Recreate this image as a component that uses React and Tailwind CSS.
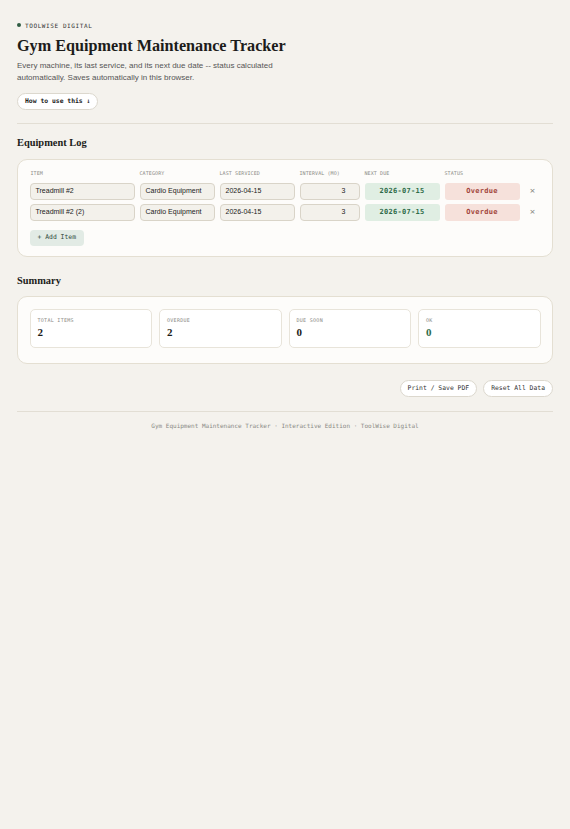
import React from 'react';

const mono = "font-['DejaVu_Sans_Mono',monospace]";
const serif = "font-['Liberation_Serif',serif]";
const sans = "font-['Liberation_Sans',Arial,sans-serif]";

const items = [
  { name: 'Treadmill #2', category: 'Cardio Equipment', last: '2026-04-15', interval: 3, next: '2026-07-15', status: 'Overdue' },
  { name: 'Treadmill #2 (2)', category: 'Cardio Equipment', last: '2026-04-15', interval: 3, next: '2026-07-15', status: 'Overdue' },
];

const stats = [
  { label: 'Total Items', value: 2, tone: 'text-[#1c1c1a]' },
  { label: 'Overdue', value: 2, tone: 'text-[#1c1c1a]' },
  { label: 'Due Soon', value: 0, tone: 'text-[#1c1c1a]' },
  { label: 'OK', value: 0, tone: 'text-[#2e6b48]' },
];

const cols = 'grid grid-cols-[105px_75px_75px_60px_75px_75px_1fr] gap-x-[5px]';
const field = `h-[17px] rounded-[4px] border border-[#d9d4c8] bg-[#f3f1eb] px-[5px] text-[7px] text-[#222] flex items-center ${sans}`;

const EquipmentRow = ({ item }) => (
  <div className={`${cols} items-center`}>
    <div className={field}>{item.name}</div>
    <div className={field}>{item.category}</div>
    <div className={field}>{item.last}</div>
    <div className={`${field} justify-end pr-[13px]`}>{item.interval}</div>
    <div className={`h-[17px] rounded-[3px] bg-[#e0eee3] flex items-center justify-center text-[7px] font-bold tracking-[0.3px] text-[#2e6b48] ${mono}`}>
      {item.next}
    </div>
    <div className={`h-[17px] rounded-[3px] bg-[#f6e1db] flex items-center justify-center text-[7px] font-bold tracking-[0.3px] text-[#a2453a] ${mono}`}>
      {item.status}
    </div>
    <div className="flex justify-center text-[9.5px] leading-none text-[#8a8a85]">×</div>
  </div>
);

export default function App() {
  return (
    <div className="min-h-screen bg-[#f4f2ed] text-[#1c1c1a]">
      <div className="px-[17px] pt-[21px] pb-10">
        {/* header */}
        <div className="flex items-center gap-[4px] h-[8px]">
          <span className="w-[4px] h-[4px] rounded-full bg-[#2f5d43]"></span>
          <span className={`text-[6px] tracking-[0.6px] text-[#333] ${mono}`}>TOOLWISE DIGITAL</span>
        </div>
        <h1 className={`mt-[7px] text-[16.2px] leading-[20px] font-bold ${serif}`}>
          Gym Equipment Maintenance Tracker
        </h1>
        <p className={`mt-[4px] max-w-[292px] text-[8px] leading-[12px] text-[#555] ${sans}`}>
          Every machine, its last service, and its next due date -- status calculated automatically. Saves automatically in this browser.
        </p>
        <button className={`mt-[9px] h-[17px] px-[7px] rounded-full border border-[#dcd8ce] bg-white text-[6.4px] font-bold text-[#222] ${mono}`}>
          How to use this ↓
        </button>

        <div className="mt-[13px] border-t border-[#e2ded4]"></div>

        {/* equipment log */}
        <h2 className={`mt-[12px] text-[10.4px] leading-[14px] font-bold ${serif}`}>Equipment Log</h2>
        <div className="mt-[9px] rounded-[10px] border-[1.5px] border-[#e4dfd2] bg-[#fdfcfa] px-[11.5px] pt-[10px] pb-[10.5px]">
          <div className={`${cols} h-[8px] items-center text-[5px] tracking-[0.1px] text-[#8a8a85] ${mono}`}>
            <span className="pl-[1px]">ITEM</span>
            <span>CATEGORY</span>
            <span>LAST SERVICED</span>
            <span>INTERVAL (MO)</span>
            <span>NEXT DUE</span>
            <span>STATUS</span>
            <span></span>
          </div>
          <div className="mt-[4.5px] flex flex-col gap-[4px]">
            {items.map((it, i) => (
              <EquipmentRow key={i} item={it} />
            ))}
          </div>
          <button className={`mt-[9px] h-[16px] px-[8px] rounded-[4px] bg-[#e2ebe5] text-[6.4px] text-[#2d4a3a] ${mono}`}>
            + Add Item
          </button>
        </div>

        {/* summary */}
        <h2 className={`mt-[17px] text-[10.4px] leading-[14px] font-bold ${serif}`}>Summary</h2>
        <div className="mt-[8px] rounded-[10px] border-[1.5px] border-[#e4dfd2] bg-[#fdfcfa] px-[11.5px] pt-[12px] pb-[15px]">
          <div className="grid grid-cols-4 gap-[7px]">
            {stats.map((s) => (
              <div key={s.label} className="h-[39px] rounded-[5px] border border-[#e8e4da] bg-white px-[7px] pt-[6px]">
                <div className={`text-[5px] leading-[8px] tracking-[0.3px] uppercase text-[#8a8a85] ${mono}`}>{s.label}</div>
                <div className={`mt-[1px] text-[11px] leading-[14px] font-bold ${serif} ${s.tone}`}>{s.value}</div>
              </div>
            ))}
          </div>
        </div>

        {/* actions */}
        <div className="mt-[16px] flex justify-end gap-[6px]">
          <button className={`h-[17px] px-[7px] rounded-full border border-[#dcd8ce] bg-white text-[6.4px] text-[#333] ${mono}`}>
            Print / Save PDF
          </button>
          <button className={`h-[17px] px-[7px] rounded-full border border-[#dcd8ce] bg-white text-[6.4px] text-[#333] ${mono}`}>
            Reset All Data
          </button>
        </div>

        <div className="mt-[14px] border-t border-[#e2ded4]"></div>
        <p className={`mt-[10px] text-center text-[6px] leading-[8px] text-[#8a8a85] ${mono}`}>
          Gym Equipment Maintenance Tracker · Interactive Edition · ToolWise Digital
        </p>
      </div>
    </div>
  );
}
